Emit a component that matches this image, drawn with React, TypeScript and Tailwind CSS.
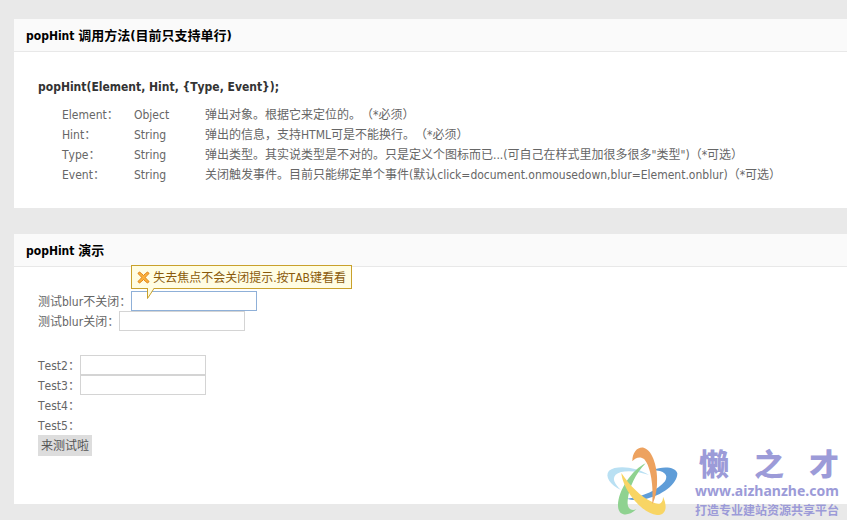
import type { ReactNode } from "react";

const params = [
  { name: "Element：", type: "Object", text: "弹出对象。根据它来定位的。（*必须）" },
  { name: "Hint：", type: "String", text: "弹出的信息，支持HTML可是不能换行。（*必须）" },
  { name: "Type：", type: "String", text: "弹出类型。其实说类型是不对的。只是定义个图标而已...(可自己在样式里加很多很多\"类型\")（*可选）" },
  { name: "Event：", type: "String", text: "关闭触发事件。目前只能绑定单个事件(默认click=document.onmousedown,blur=Element.onblur)（*可选）" },
];

function Panel({ title, children }: { title: string; children: ReactNode }) {
  return (
    <section className="bg-white">
      <h2 className="border-b border-[#e8e8e8] bg-[#fafafa] px-3 pt-[7px] pb-[5px] text-[12px] leading-5 font-bold text-black">
        popHint <span className="text-[13px]">{title}</span>
      </h2>
      {children}
    </section>
  );
}

function Field({ id, label, hint }: { id: string; label: string; hint?: string }) {
  return (
    <div className="flex h-5 items-center">
      <label htmlFor={id} className="pt-0.5">{label}</label>
      <span className="relative flex">
        <input
          id={id}
          type="text"
          className={`h-5 w-[126px] border bg-white px-1 outline-none ${hint ? "border-[#8fb0d8]" : "border-[#d4d4d4]"}`}
        />
        {hint && <Hint text={hint} />}
      </span>
    </div>
  );
}

function Hint({ text }: { text: string }) {
  return (
    <div
      role="tooltip"
      className="absolute bottom-[22px] left-0 flex h-6 items-center gap-[3px] border border-[#c9a12b] bg-[#fffde3] px-[5px] whitespace-nowrap text-[#8a5a0a]"
    >
      <svg width="13" height="13" viewBox="0 0 14 14" aria-hidden="true">
        <path
          d="M2.5 1 Q5 2.5 7 4.8 Q9 2.5 11.5 1 L13 2.8 Q10.5 4.5 9 7 Q10.5 9.5 13 11.2 L11.5 13 Q9 11.5 7 9.2 Q5 11.5 2.5 13 L1 11.2 Q3.5 9.5 5 7 Q3.5 4.5 1 2.8 Z"
          fill="#fbb03a"
          stroke="#dc7e12"
        />
      </svg>
      <span className="pt-0.5">{text}</span>
      <svg className="absolute top-full left-3.5" width="10" height="12" viewBox="0 0 10 12" aria-hidden="true">
        <path d="M1.5 -1 V10.5 L8 0 V-1 Z" fill="#fffde3" />
        <path d="M1.5 0 V10.5 L8 0.5" fill="none" stroke="#c9a12b" />
      </svg>
    </div>
  );
}

function Watermark() {
  return (
    <div className="absolute right-2 bottom-0 flex items-end gap-3 text-[#9c9bd8]">
      <svg width="80" height="76" viewBox="0 0 240 228" aria-hidden="true">
        <path d="M138 93 C100 68 40 62 18 80 C4 98 22 122 54 138 C36 120 26 105 38 92 C54 78 96 78 138 93 Z" fill="#b9e0f3" />
        <path d="M148 78 C180 66 218 68 223 88 C224 120 176 156 124 166 C104 169 84 169 72 164 C120 160 166 136 186 112 C198 92 184 80 148 78 Z" fill="#5f9dd8" />
        <path d="M128 58 C88 76 44 140 45 186 C46 216 74 220 100 196 C82 202 72 192 74 170 C78 128 98 90 128 58 Z" fill="#8fd290" />
        <path d="M55 87 C60 138 116 208 162 213 C190 214 194 188 180 158 C180 180 168 184 148 174 C112 158 80 124 55 87 Z" fill="#f8d564" />
        <path d="M88 52 C88 24 104 8 122 11 C150 18 166 76 162 122 C160 148 155 168 148 180 C152 128 144 70 124 46 C112 36 98 40 88 52 Z" fill="#eda25f" />
      </svg>
      <div className="flex flex-col">
        <div className="flex justify-between pl-1 font-['Noto_Sans_CJK_SC',sans-serif] text-[30px] leading-9 font-black">
          <span>懒</span>
          <span>之</span>
          <span>才</span>
        </div>
        <a href="#top" className="pt-0.5 font-['Noto_Sans',sans-serif] text-[14px] leading-[18px] font-bold">
          www.aizhanzhe.com
        </a>
        <p className="font-['Noto_Sans_CJK_SC',sans-serif] text-[12px] leading-5 font-bold">
          打造专业建站资源共享平台
        </p>
      </div>
    </div>
  );
}

export default function App() {
  return (
    <main className="relative flex min-h-screen flex-col gap-6.5 bg-[#e9e9e9] pt-[19px] pb-4 pl-3.5 font-['DejaVu_Sans_Condensed','Noto_Sans_CJK_SC',sans-serif] text-[12px] leading-5 text-[#666] [font-kerning:none] [text-spacing-trim:space-all]">
      <Panel title="调用方法(目前只支持单行)">
        <div className="px-6 pt-[25px] pb-[23px]">
          <h3 className="text-[12px] font-bold text-[#333]">popHint(Element, Hint, &#123;Type, Event&#125;);</h3>
          <table className="mt-2 ml-6 border-collapse text-left">
            <tbody>
              {params.map((p) => (
                <tr key={p.name}>
                  <th scope="row" className="w-[72px] p-0 font-normal">{p.name}</th>
                  <td className="w-[71px] p-0">{p.type}</td>
                  <td className="p-0 whitespace-nowrap">{p.text}</td>
                </tr>
              ))}
            </tbody>
          </table>
        </div>
      </Panel>
      <Panel title="演示">
        <form className="flex flex-col items-start px-6 pt-6 pb-12">
          <Field id="blur-open" label="测试blur不关闭：" hint="失去焦点不会关闭提示.按TAB键看看" />
          <Field id="blur-close" label="测试blur关闭：" />
          <div className="mt-6">
            <Field id="test2" label="Test2：" />
            <Field id="test3" label="Test3：" />
            <p className="flex h-5 items-center pt-0.5">Test4：</p>
            <p className="flex h-5 items-center pt-0.5">Test5：</p>
          </div>
          <button type="button" className="bg-[#ddd] px-[3px] pt-px text-[#555]">来测试啦</button>
        </form>
      </Panel>
      <Watermark />
    </main>
  );
}
